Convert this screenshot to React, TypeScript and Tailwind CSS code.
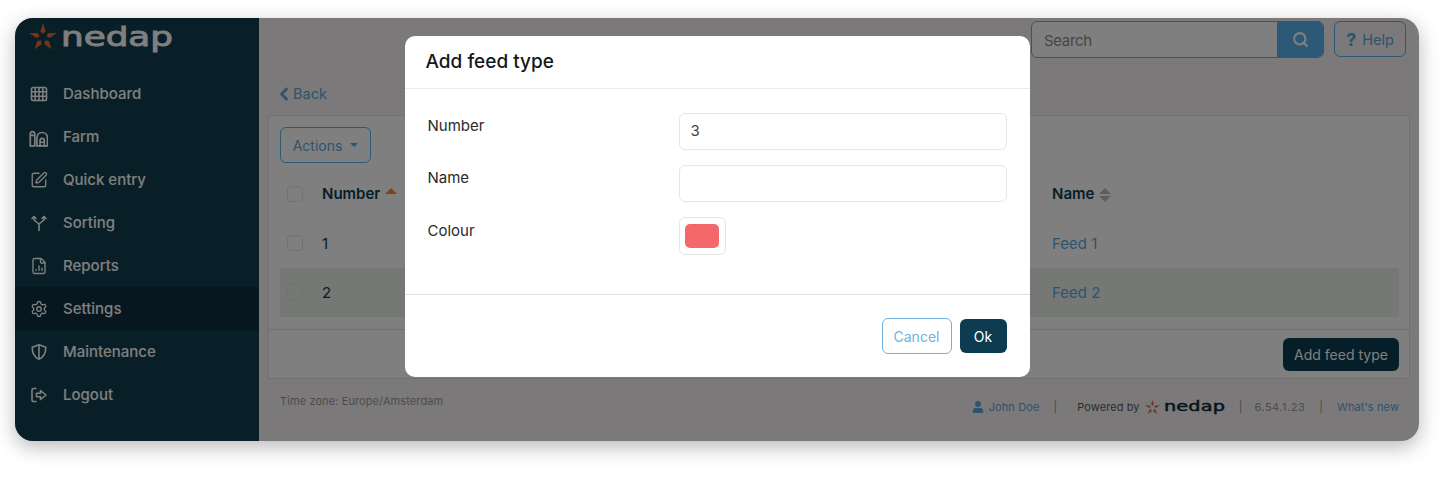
import { ChevronLeft, FileChartColumn, Search, Settings, SquarePen } from "lucide-react";
import { FaUser } from "react-icons/fa";
import type { ReactNode } from "react";

function Star({ size }: { size: number }) {
  const rays = [0, 72, 144, 216, 288];
  return (
    <svg width={size} height={size} viewBox="0 0 28 28" className="shrink-0">
      {rays.map((r) => (
        <polygon key={r} points="14,0 16.600,8.500 14,10.800 11.400,8.500" fill="#f26a2e" transform={`rotate(${r} 14 14.5)`} />
      ))}
    </svg>
  );
}

function Wordmark({ width, height, color, bold }: { width: number; height: number; color: string; bold: number }) {
  return (
    <svg width={width} height={height} viewBox={`0 0 ${width} ${height}`} className="shrink-0 overflow-visible">
      <text
        x="0"
        y={height * 0.86}
        textLength={width}
        lengthAdjust="spacingAndGlyphs"
        fontFamily="DejaVu Sans"
        fontSize={height * 1.23}
        fill={color}
        stroke={color}
        strokeWidth={bold}
      >
        nedap
      </text>
    </svg>
  );
}

const ic = { width: 18, height: 18, viewBox: "0 0 18 18", fill: "none", stroke: "currentColor", strokeWidth: 1.6, strokeLinecap: "round" as const, strokeLinejoin: "round" as const };

function GridIcon() {
  return (
    <svg {...ic}>
      <rect x="1.500" y="2.500" width="15" height="13" rx="1.800" />
      <path d="M1.500 6.800h15M1.500 11.200h15M5.200 2.500v13M9 2.500v13M12.800 2.500v13" />
    </svg>
  );
}
function FarmIcon() {
  return (
    <svg {...ic} width="19" height="19">
      <path d="M1.200 17V7h4.300M1.200 17h4.300V7M1.200 7c-.3-2 .5-3.500 2.100-3.500S5.800 5 5.500 7" />
      <path d="M7.500 17V9.500c0-7 10-7 10 0V17z" />
      <path d="M10.500 17v-5c0-2.800 4-2.800 4 0v5M10.500 13.500h4" />
    </svg>
  );
}
function SortIcon() {
  return (
    <svg {...ic}>
      <path d="M9 16.500v-6.500L4 6V2.500M9 10l5-4V2.500" />
      <path d="M2 4.500 4 2.500 6 4.500M12 4.500l2-2 2 2" />
    </svg>
  );
}
function ShieldIcon() {
  return (
    <svg {...ic}>
      <path d="M9 1.800 15.800 4.300c0 5.800-1.800 9.900-6.800 12C4 14.200 2.200 10.100 2.200 4.300z" />
      <path d="M9 2.500V15.500" />
    </svg>
  );
}
function LogoutIcon() {
  return (
    <svg {...ic}>
      <path d="M6 2.500H3.500A1.500 1.500 0 0 0 2 4v10a1.500 1.500 0 0 0 1.500 1.500H6" />
      <path d="M6.500 7.200h4V4.500L16 9l-5.500 4.500v-2.700h-4z" />
    </svg>
  );
}

const nav: [string, ReactNode, boolean?][] = [
  ["Dashboard", <GridIcon />],
  ["Farm", <FarmIcon />],
  ["Quick entry", <SquarePen size={18} strokeWidth={1.8} />],
  ["Sorting", <SortIcon />],
  ["Reports", <FileChartColumn size={18} strokeWidth={1.8} />],
  ["Settings", <Settings size={18} strokeWidth={1.8} />, true],
  ["Maintenance", <ShieldIcon />],
  ["Logout", <LogoutIcon />],
];

function Check() {
  return <span className="block w-4 h-4 -mt-[2px] rounded-[4px] border border-[#e4e4e4] shrink-0" />;
}

function Sort({ active }: { active?: boolean }) {
  return active ? (
    <span className="ml-[5px] -mt-[8px] w-0 h-0 border-x-[6px] border-x-transparent border-b-[6px] border-b-[#f58a3a]" />
  ) : (
    <span className="ml-[5px] flex flex-col gap-[2px]">
      <span className="w-0 h-0 border-x-[6px] border-x-transparent border-b-[6px] border-b-[#bdbdbd]" />
      <span className="w-0 h-0 border-x-[6px] border-x-transparent border-t-[6px] border-t-[#bdbdbd]" />
    </span>
  );
}

export default function App() {
  return (
    <div className="w-[1442px] h-[477px] bg-white pl-[15px] pt-[18px] overflow-hidden font-['Inter',sans-serif] text-[15px]">
      <div className="relative w-[1404px] h-[423px] rounded-[18px] flex bg-[#f6f2f4] shadow-[0_6px_20px_rgba(0,0,0,0.28)]">
        <aside className="w-[244px] shrink-0 bg-[#123e50] rounded-l-[18px] text-white">
          <div className="h-[54px] flex items-start pl-[14px] pt-[5px] gap-[4px]">
            <Star size={28} />
            <div className="pt-[4px]">
              <Wordmark width={112} height={22} color="#ffffff" bold={0.9} />
            </div>
          </div>
          {nav.map(([label, icon, active]) => (
            <div key={label} className={`h-[43px] flex items-center pl-[14px] pt-[1px] gap-[15px] font-medium ${active ? "bg-[#0d2f40]" : ""}`}>
              <span className="w-[19px] flex justify-center">{icon}</span>
              <span>{label}</span>
            </div>
          ))}
        </aside>

        <main className="flex-1 flex flex-col min-w-0 px-[9px] rounded-r-[18px]">
          <div className="h-[39px] pt-[3px] flex justify-end gap-[10px] pr-[4px] shrink-0 text-[14px]">
            <div className="w-[293px] h-[37px] flex rounded-[6px] border border-[#59b2ee] bg-white overflow-hidden">
              <span className="flex-1 pl-3 pt-[1px] leading-[35px] text-[15px] tracking-[-0.35px] text-[#8c8c8c]">Search</span>
              <span className="w-[46px] bg-[#59b2ee] flex items-center justify-center text-white">
                <Search size={17} strokeWidth={3} />
              </span>
            </div>
            <div className="w-[72px] h-[36px] rounded-[6px] border border-[#59b2ee] flex items-center justify-center gap-[6px] text-[#59a8e0] pt-[1px]">
              <span className="font-bold text-[18px] leading-none">?</span>
              <span className="text-[14.5px]">Help</span>
            </div>
          </div>
          <div className="h-[58px] shrink-0 flex items-center pl-[9px] pt-[15px] text-[#5ca7dc] text-[14.5px]">
            <ChevronLeft size={20} strokeWidth={3.4} className="-ml-[3px] mr-[-1px]" />
            Back
          </div>
          <section className="h-[264px] shrink-0 bg-white border border-[#e4e2e3] flex flex-col">
            <div className="flex-1 pl-[11px] pr-[10px] pt-[11px]">
              <div className="w-[91px] h-[36px] rounded-[6px] border border-[#59b2ee] flex items-center justify-center gap-[8px] text-[#5ca7dc] text-[14px]">
                Actions
                <span className="w-0 h-0 border-x-[4px] border-x-transparent border-t-[4px] border-t-[#5ca7dc]" />
              </div>
              <div className="h-[49px] mt-[7px] flex items-center pl-[7px] font-semibold text-[#0d3c50]">
                <Check />
                <span className="ml-[19px] flex items-center">Number <Sort active /></span>
                <span className="ml-auto w-[347px] flex items-center">Name <Sort /></span>
              </div>
              <div className="h-[49px] flex items-center pl-[7px] pt-[1px] text-[#0d3c50]">
                <Check />
                <span className="ml-[19px]">1</span>
                <span className="ml-auto w-[347px] text-[#5ca7dc]">Feed 1</span>
              </div>
              <div className="h-[49px] flex items-center pl-[7px] pt-[1px] text-[#0d3c50] bg-[#ecf0ec]">
                <Check />
                <span className="ml-[19px]">2</span>
                <span className="ml-auto w-[347px] text-[#5ca7dc]">Feed 2</span>
              </div>
            </div>
            <div className="h-[49px] shrink-0 border-t border-[#e4e2e3] flex justify-end items-center pr-[10px]">
              <span className="h-[33px] w-[116px] rounded-[6px] bg-[#0d3c50] text-white flex items-center justify-center text-[14px]">Add feed type</span>
            </div>
          </section>
          <footer className="flex items-start h-[44px] pl-[12px] pr-[11px] text-[11px] text-[#999] tracking-[0.1px]">
            <span className="mt-[14px]">Time zone: Europe/Amsterdam</span>
            <div className="ml-auto mt-[20px] flex items-center">
              <span className="flex items-center text-[#5ca7dc]">
                <FaUser className="w-[12px] h-[12px] mr-[5px]" />
                John Doe
              </span>
              <span className="ml-[14px] mr-[20px]">|</span>
              <span className="flex items-center text-[#5c5c5c]">
                Powered by
                <span className="ml-[5px]"><Star size={15} /></span>
                <span className="ml-[4px]"><Wordmark width={61} height={12} color="#0d2a3a" bold={0.5} /></span>
              </span>
              <span className="ml-[14px] mr-[12px]">|</span>
              <span className="tracking-[0.5px]">6.54.1.23</span>
              <span className="mx-[14px]">|</span>
              <span className="text-[#5ca7dc]">What's new</span>
            </div>
          </footer>
        </main>

        <div className="absolute inset-0 bg-black/50 rounded-[18px] flex justify-center items-start pt-[18px]">
          <div className="w-[625px] h-[341px] bg-white rounded-[10px] flex flex-col text-[#2a2a2a]">
            <div className="h-[53px] shrink-0 border-b border-[#eceaeb] pl-[21px] flex items-center text-[19px] font-medium text-[#15181a]">
              Add feed type
            </div>
            <div className="h-[205px] shrink-0 pl-[23px] pr-[23px] pt-[24px] flex flex-col gap-[15px]">
              <div className="flex">
                <span className="w-[251px] leading-[26px]">Number</span>
                <div className="flex-1 h-[37px] border border-[#e6e6e6] rounded-[6px] pl-[11px] flex items-center text-[#444]">3</div>
              </div>
              <div className="flex">
                <span className="w-[251px] leading-[26px]">Name</span>
                <div className="flex-1 h-[37px] border border-[#e6e6e6] rounded-[6px]" />
              </div>
              <div className="flex">
                <span className="w-[251px] leading-[28px]">Colour</span>
                <div className="w-[47px] h-[38px] border border-[#e6e6e6] rounded-[6px] flex items-center justify-center">
                  <span className="block w-[34px] h-[24px] rounded-[5px] bg-[#f4686b]" />
                </div>
              </div>
            </div>
            <div className="flex-1 border-t border-[#e2e0e1] flex justify-end items-start gap-[8px] pr-[23px] pt-[23px]">
              <span className="w-[70px] h-[36px] rounded-[6px] border border-[#6fb1e1] text-[#6fb1e1] text-[14px] flex items-center justify-center">Cancel</span>
              <span className="w-[47px] h-[34px] mt-[1px] rounded-[6px] bg-[#0d3c50] text-white text-[14px] flex items-center justify-center">Ok</span>
            </div>
          </div>
        </div>
      </div>
    </div>
  );
}
